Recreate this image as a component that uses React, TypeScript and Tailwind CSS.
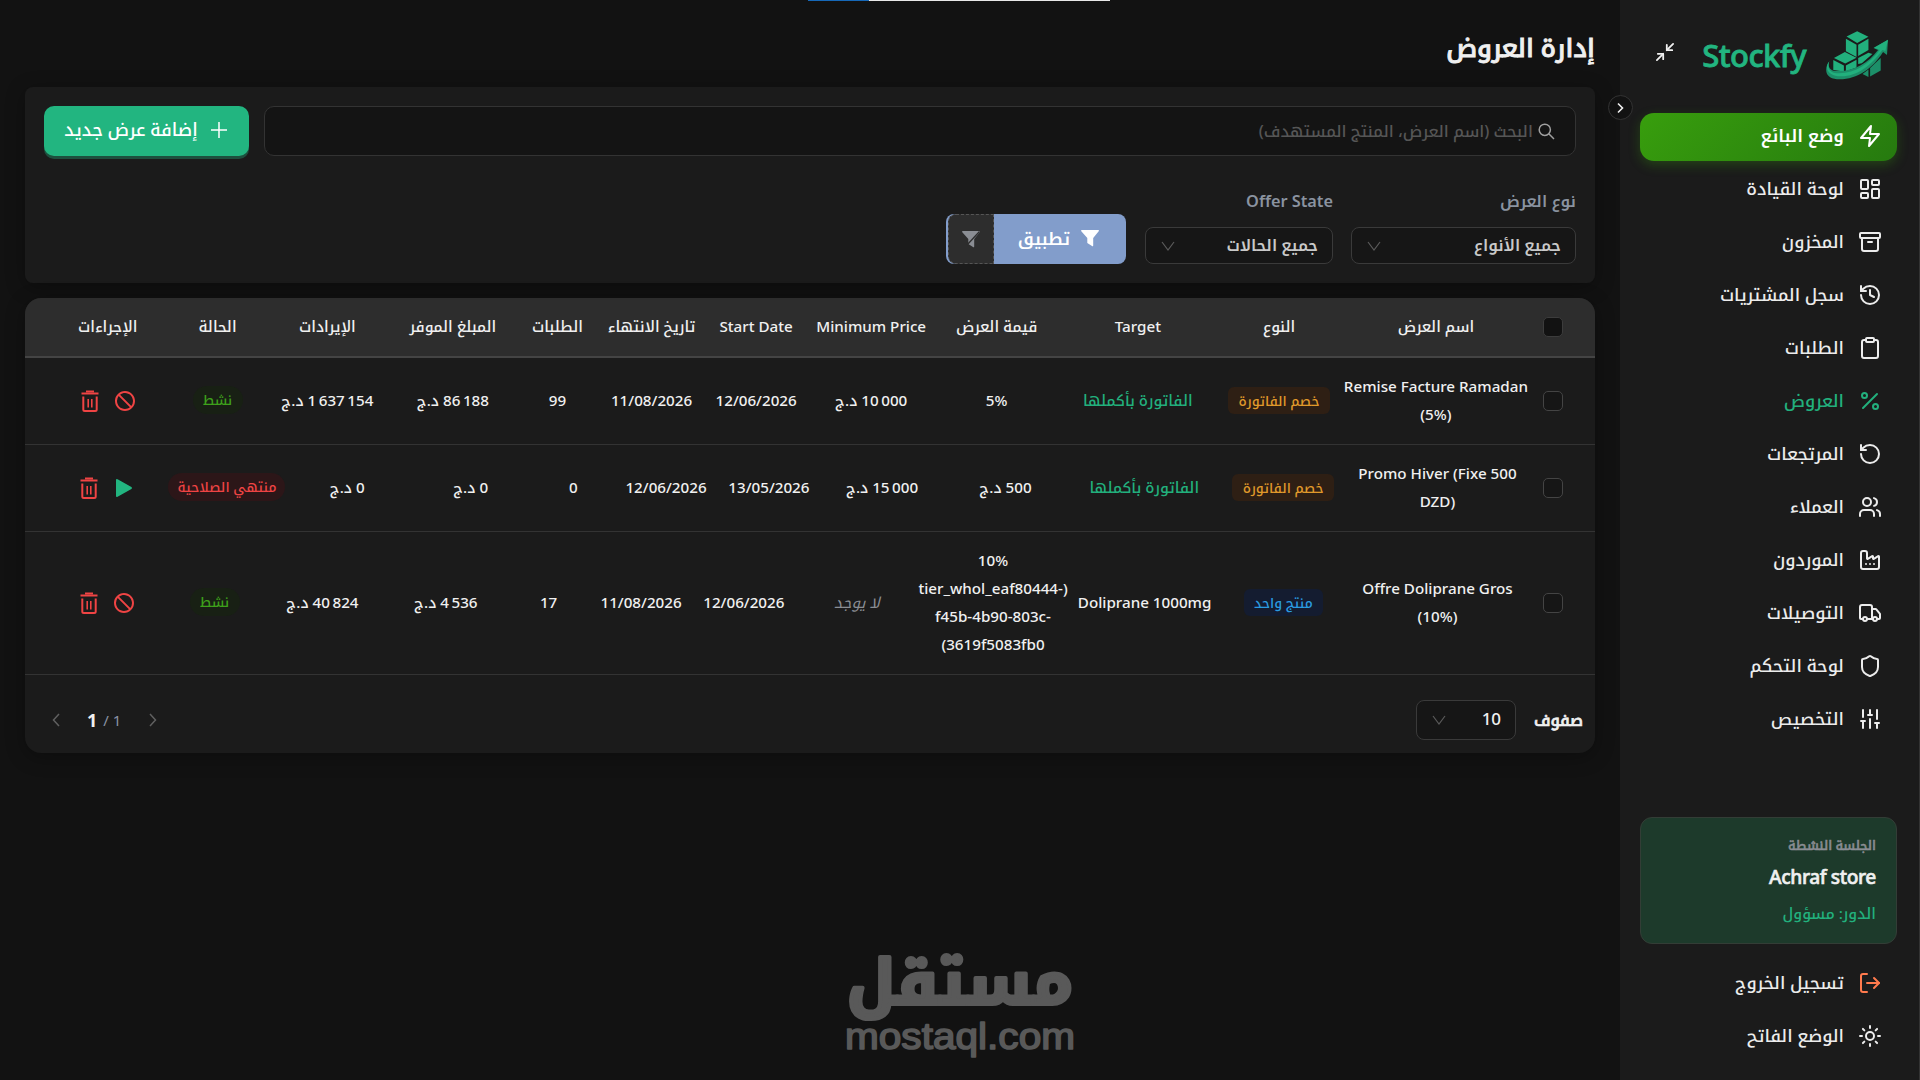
import type { ReactNode } from "react";
import {
  Archive,
  Clipboard,
  Factory,
  History,
  LayoutDashboard,
  LogOut,
  Minimize2,
  Percent,
  RotateCcw,
  Shield,
  SlidersVertical,
  Sun,
  Truck,
  Users,
} from "lucide-react";
import { FiZap } from "react-icons/fi";
import { MdBlock } from "react-icons/md";

const navItems = [
  { label: "لوحة القيادة", icon: LayoutDashboard },
  { label: "المخزون", icon: Archive },
  { label: "سجل المشتريات", icon: History },
  { label: "الطلبات", icon: Clipboard },
  { label: "العروض", icon: Percent, active: true },
  { label: "المرتجعات", icon: RotateCcw },
  { label: "العملاء", icon: Users },
  { label: "الموردون", icon: Factory },
  { label: "التوصيلات", icon: Truck },
  { label: "لوحة التحكم", icon: Shield },
  { label: "التخصيص", icon: SlidersVertical },
];

const columns = [
  "grow-18",
  "grow-12",
  "grow-15",
  "grow-12",
  "grow-12",
  "grow-10",
  "grow-10",
  "grow-8",
  "grow-12",
  "grow-12",
  "grow-9",
  "grow-12",
];

const headers = [
  "اسم العرض",
  "النوع",
  "Target",
  "قيمة العرض",
  "Minimum Price",
  "Start Date",
  "تاريخ الانتهاء",
  "الطلبات",
  "المبلغ الموفر",
  "الإيرادات",
  "الحالة",
  "الإجراءات",
];

interface Offer {
  name: string[];
  type: "invoice" | "product";
  target: string;
  value: string[];
  minimum?: string;
  start: string;
  end: string;
  orders: string;
  saved: string;
  revenue: string;
  active: boolean;
}

const offers: Offer[] = [
  {
    name: ["Remise Facture Ramadan", "(5%)"],
    type: "invoice",
    target: "الفاتورة بأكملها",
    value: ["5%"],
    minimum: "10\u202f000",
    start: "12/06/2026",
    end: "11/08/2026",
    orders: "99",
    saved: "86\u202f188",
    revenue: "1\u202f637\u202f154",
    active: true,
  },
  {
    name: ["Promo Hiver (Fixe 500", "DZD)"],
    type: "invoice",
    target: "الفاتورة بأكملها",
    value: ["500 د.ج"],
    minimum: "15\u202f000",
    start: "13/05/2026",
    end: "12/06/2026",
    orders: "0",
    saved: "0",
    revenue: "0",
    active: false,
  },
  {
    name: ["Offre Doliprane Gros", "(10%)"],
    type: "product",
    target: "Doliprane 1000mg",
    value: ["10%", "tier_whol_eaf80444-)", "f45b-4b90-803c-", "(3619f5083fb0"],
    start: "12/06/2026",
    end: "11/08/2026",
    orders: "17",
    saved: "4\u202f536",
    revenue: "40\u202f824",
    active: true,
  },
];

function Logo() {
  return (
    <svg viewBox="680 92 190 150" className="h-[50px] w-[63px]" fill="#22b07d">
      <path d="M742 111 774 95l34 17-34 19zM740 118l32 18v37l-32-17zM777 136l31-18v34l-31 18z" />
      <path d="m704 176 33-18 35 17-34 18zM702 182l32 17v18l-32-5zM740 199l32-18v24l-32 11z" />
      <path d="m777 176 31-16 12 4-32 28-11 2z" />
      <path fill="#1c8f69" d="m790 224 18-13v22zM813 206l32-30v38l-32 18z" />
      <path
        fill="#1c8f69"
        d="M690 186c-5 12-1 27 18 29 52 4 98-22 129-63l-14-6 44-25-3 46-12-9c-32 52-84 86-139 82-37-2-39-34-23-54z"
      />
      <path d="M690 186c-7 18 1 34 22 36 54 3 96-27 130-70l-17-7 42-24-8 34-9-3c-35 48-80 84-134 79-32-4-41-26-26-45z" />
    </svg>
  );
}

function ChevronDown() {
  return (
    <svg viewBox="0 0 14 12" className="h-3 w-3.5 text-[#5a5a5a]" fill="none" stroke="currentColor" strokeWidth="1.2">
      <path d="M1 2l6 8 6-8" />
    </svg>
  );
}

function FilterIcon({ slash }: { slash?: boolean }) {
  return (
    <svg viewBox="0 0 18 17" className="h-[17px] w-[18px]" fill="currentColor">
      <path d="M.6 0h16.8q.9.5.3 1.3L12.2 8v7.4q0 .9-.8.9L6.3 13V8L.3 1.3Q-.2.5.6 0z" />
      {slash && <path d="M5 14 17.5.5" stroke="#2d2d2d" strokeWidth="1.3" />}
    </svg>
  );
}

function TrashIcon() {
  return (
    <svg viewBox="0 0 18 22" className="h-[22px] w-[18px]" fill="none" stroke="currentColor" strokeWidth="2">
      <path d="M.5 3.5h17" />
      <path d="M5 1.5h8" />
      <path d="M2.3 6.5v13q0 1.500 1.500 1.500h10.400q1.500 0 1.500-1.500v-13" />
      <path d="M7.2 9v8.5M10.8 9v8.5" strokeWidth="1.6" />
    </svg>
  );
}

function PlayIcon() {
  return (
    <svg viewBox="0 0 18 20" className="h-5 w-[18px]" fill="currentColor">
      <path d="M1 2.2Q1 .4 2.6 1.300l13.800 7.600q1.400 1.100 0 2.200L2.600 18.700Q1 19.600 1 17.800z" />
    </svg>
  );
}

function Checkbox({ header }: { header?: boolean }) {
  return (
    <div className={`flex w-[53px] shrink-0 items-center ${header ? "" : "pt-0.5"}`}>
      <span
        className={`ms-5 size-5 rounded-[5px] border ${
          header ? "border-[#3c3c3c] bg-[#121212]" : "border-[#444444] bg-[#161616]"
        }`}
      />
    </div>
  );
}

function Cell({ index, className = "", children }: { index: number; className?: string; children: ReactNode }) {
  return (
    <div className={`flex basis-0 items-center justify-center text-center whitespace-nowrap ${columns[index]} ${className || "min-w-0"}`}>
      {children}
    </div>
  );
}

function Money({ amount }: { amount: string }) {
  return (
    <span>
      <bdi>{amount}</bdi> د.ج
    </span>
  );
}

function OfferRow({ offer }: { offer: Offer }) {
  return (
    <div className="flex border-b border-[#333333] ps-3 pe-5 pt-3.5 pb-4 text-[15.2px] leading-[28px]">
      <Checkbox />
      <Cell index={0}>
        <div dir="ltr">
          {offer.name.map((line) => (
            <div key={line}>{line}</div>
          ))}
        </div>
      </Cell>
      <Cell index={1}>
        <span
          className={`rounded-md text-[13.6px] leading-[27px] ${
            offer.type === "invoice" ? "w-[102px] bg-[#2e1f14] text-[#e09a2b]" : "w-[79px] bg-[#141c30] text-[#2a9be0]"
          }`}
        >
          {offer.type === "invoice" ? "خصم الفاتورة" : "منتج واحد"}
        </span>
      </Cell>
      <Cell index={2} className={offer.type === "invoice" ? "min-w-0 text-[#22b07d]" : ""}>
        {offer.target}
      </Cell>
      <Cell index={3} className={offer.value.length > 1 ? "min-w-[149px]" : ""}>
        <div>
          {offer.value.map((line) => (
            <div key={line} dir={line.includes("د") ? "rtl" : "ltr"}>
              {line}
            </div>
          ))}
        </div>
      </Cell>
      <Cell index={4}>
        {offer.minimum ? <Money amount={offer.minimum} /> : <span className="font-normal text-[#8a8d93] italic">لا يوجد</span>}
      </Cell>
      <Cell index={5}>{offer.start}</Cell>
      <Cell index={6}>{offer.end}</Cell>
      <Cell index={7}>{offer.orders}</Cell>
      <Cell index={8}>
        <Money amount={offer.saved} />
      </Cell>
      <Cell index={9}>
        <Money amount={offer.revenue} />
      </Cell>
      <Cell index={10} className={offer.active ? "" : "min-w-[117px]"}>
        <span
          className={`rounded-full text-[13.6px] leading-7 ${
            offer.active ? "w-[50px] bg-[#182014] text-[#3ea11b]" : "w-[117px] bg-[#2c1618] text-[#ef4444]"
          }`}
        >
          {offer.active ? "نشط" : "منتهي الصلاحية"}
        </span>
      </Cell>
      <Cell index={11}>
        <div className="flex items-center gap-3.5 pt-px pl-[3px] text-[#ef4444]">
          {offer.active ? (
            <MdBlock className="size-6 -scale-x-100" />
          ) : (
            <span className="flex w-6 justify-center text-[#22b580]">
              <PlayIcon />
            </span>
          )}
          <TrashIcon />
        </div>
      </Cell>
    </div>
  );
}

function Select({ value, className }: { value: string; className: string }) {
  return (
    <div className={`flex items-center justify-between rounded-lg border border-[#3a3a3a] bg-[#161616] ps-3.5 pe-[15px] ${className}`}>
      <span className="pb-0.5">{value}</span>
      <ChevronDown />
    </div>
  );
}

function Sidebar() {
  return (
    <aside className="relative flex w-[300px] shrink-0 flex-col border-r border-[#333333] bg-[#1b1b1b] ps-[22px] pe-5">
      <button className="absolute top-[95px] -left-3 flex size-[25px] items-center justify-center rounded-full border border-[#333333] bg-[#121212] pr-px text-[#f0f0f0]">
        <svg viewBox="0 0 8 12" className="h-3 w-2" fill="none" stroke="currentColor" strokeWidth="1.6">
          <path d="M2 1.5 6.5 6 2 10.5" />
        </svg>
      </button>

      <div className="flex h-[113px] shrink-0 items-start ps-2 pt-[30px]">
        <Logo />
        <span className="ms-[20px] mt-0.5 text-[31px] leading-[46px] font-medium tracking-[-0.6px] text-[#22b580] [-webkit-text-stroke:0.8px]">
          Stockfy
        </span>
        <Minimize2 className="ms-auto me-[13px] mt-[10px] size-6 scale-90 text-[#f0f0f0]" strokeWidth={2} />
      </div>

      <nav className="flex flex-col gap-[5px] text-[17.6px] font-medium text-[#ececec]">
        <a className="flex h-12 items-center gap-3.5 rounded-[14px] bg-linear-[135deg,#389e0d,#267a0f] px-[15px] pb-[3px] font-semibold text-white shadow-[0_4px_12px_rgba(56,158,13,0.3)]">
          <FiZap className="size-6" />
          وضع البائع
        </a>
        {navItems.map(({ label, icon: Icon, active }) => (
          <a key={label} className={`flex h-12 items-center gap-3.5 px-[15px] pb-[3px] ${active ? "text-[#22b07d]" : ""}`}>
            <Icon className="size-6" />
            {label}
          </a>
        ))}
      </nav>

      <div className="mt-auto flex h-[127px] flex-col rounded-xl border border-[#333d36] bg-[#1d3a2b] px-5 pt-[15px]">
        <span className="text-[12.8px] leading-6 font-medium text-[#8a8d93] [-webkit-text-stroke:0.5px]">الجلسة النشطة</span>
        <span className="mt-[7px] text-[19.2px] leading-[26px] font-medium tracking-[-0.4px] text-[#f0f0f0] [-webkit-text-stroke:0.6px]">
          Achraf store
        </span>
        <span className="mt-[11px] text-[15.2px] leading-6 font-medium text-[#22b07d]">الدور: مسؤول</span>
      </div>

      <div className="mt-[15px] mb-5 flex flex-col gap-[5px] text-[17.6px] font-medium text-[#ececec]">
        <a className="flex h-12 items-center gap-3.5 px-[15px] pb-px">
          <LogOut className="size-6 text-[#ff7a4d]" />
          تسجيل الخروج
        </a>
        <a className="flex h-12 items-center gap-3.5 px-[15px] pb-px">
          <Sun className="size-6" />
          الوضع الفاتح
        </a>
      </div>
    </aside>
  );
}

function Filters() {
  return (
    <section className="h-[196px] rounded-lg bg-[#1b1b1b] px-[19px] pt-[19px] shadow-[0_4px_20px_rgba(0,0,0,0.3)]">
      <div className="flex gap-[15px]">
        <div className="flex h-[50px] flex-1 items-center gap-[5px] rounded-[10px] border border-[#333333] bg-[#141414] ps-5 text-[16.2px] font-medium text-[#565656]">
          <svg viewBox="0 0 17 17" className="size-[17px] text-[#a0a0a0]" fill="none" stroke="currentColor" strokeWidth="1.5">
            <circle cx="6.8" cy="6.8" r="5.6" />
            <path d="m10.8 10.8 5.2 5.2" />
          </svg>
          البحث (اسم العرض، المنتج المستهدف)
        </div>
        <button className="flex h-[50px] w-[205px] items-center justify-center gap-[13px] rounded-[10px] bg-[#22b580] pr-0.5 pb-[3px] text-[17.8px] font-medium text-white shadow-[0_3px_0_rgba(34,181,128,0.35)]">
          <svg viewBox="0 0 16 16" className="size-4" stroke="currentColor" strokeWidth="1.5">
            <path d="M8 0v16M0 8h16" />
          </svg>
          إضافة عرض جديد
        </button>
      </div>

      <div className="mt-[31px] flex items-end gap-[18px] text-[16px] leading-7 font-semibold">
        <div className="flex flex-col">
          <label className="mb-3 text-[#8a93a0]">نوع العرض</label>
          <Select value="جميع الأنواع" className="h-[37px] w-[225px] text-[#c9c9c9]" />
        </div>
        <div className="flex flex-col">
          <label className="mb-3 text-[16.3px] text-[#8a93a0]">Offer State</label>
          <Select value="جميع الحالات" className="h-[37px] w-[188px] text-[#c9c9c9]" />
        </div>
        <div className="ms-px flex h-[50px] w-[180px] overflow-hidden rounded-lg bg-[#829dcb]">
          <button className="flex w-[132px] items-center justify-center gap-[11px] pr-[3px] pb-px text-[17.2px] font-semibold text-white">
            <FilterIcon />
            تطبيق
          </button>
          <button className="flex w-[46px] items-center justify-center rounded-l-lg border border-dashed border-[#555555] bg-[#2d2d2d] text-[#8a8d93]">
            <FilterIcon slash />
          </button>
        </div>
      </div>
    </section>
  );
}

function OffersTable() {
  return (
    <section className="mt-[15px] h-[455px] overflow-hidden rounded-2xl bg-[#1b1b1b] font-medium text-[#f0f0f0] shadow-[0_4px_20px_rgba(0,0,0,0.3)]">
      <div className="flex h-[60px] border-b-2 border-[#444444] bg-[#2d2d2d] ps-3 pe-5 text-[15.2px]">
        <Checkbox header />
        {headers.map((label, i) => (
          <Cell key={label} index={i} className="min-w-0 pb-0.5">
            {label}
          </Cell>
        ))}
      </div>
      {offers.map((offer) => (
        <OfferRow key={offer.name[0]} offer={offer} />
      ))}

      <div className="flex h-[78px] items-center justify-between pt-3 ps-3 pe-[27px]">
        <div className="flex items-center gap-[18px]">
          <span className="text-[16px] font-medium [-webkit-text-stroke:0.7px]">صفوف</span>
          <Select value="10" className="h-10 w-[100px] text-[17px]" />
        </div>
        <div dir="ltr" className="flex items-center text-[#5f5f5f]">
          <svg viewBox="0 0 8 14" className="h-3.5 w-2" fill="none" stroke="currentColor" strokeWidth="1.5">
            <path d="M7 1 1.5 7 7 13" />
          </svg>
          <span className="ms-[27px] text-[18px] font-bold text-[#f0f0f0]">1</span>
          <span className="ms-1.5 text-[15px] font-normal text-[#8a93a5]">/ 1</span>
          <svg viewBox="0 0 8 14" className="ms-7 h-3.5 w-2" fill="none" stroke="currentColor" strokeWidth="1.5">
            <path d="M1 1l5.5 6L1 13" />
          </svg>
        </div>
      </div>
    </section>
  );
}

function Watermark() {
  return (
    <svg
      viewBox="0 0 240 120"
      className="absolute top-[945px] left-[840px] h-[120px] w-[240px] overflow-visible"
      fill="#595959"
      stroke="#595959"
      strokeLinejoin="round"
    >
      <text
        x="120"
        y="59"
        direction="rtl"
        textAnchor="middle"
        fontSize="62"
        fontWeight="700"
        strokeWidth="4"
        textLength="226"
        lengthAdjust="spacingAndGlyphs"
      >
        مستقل
      </text>
      <text
        x="120"
        y="104"
        direction="ltr"
        textAnchor="middle"
        fontFamily="Liberation Sans"
        fontSize="37"
        strokeWidth="1.6"
        textLength="230"
        lengthAdjust="spacingAndGlyphs"
      >
        mostaql.com
      </text>
    </svg>
  );
}

export default function App() {
  return (
    <div
      dir="rtl"
      className="relative flex h-[1080px] w-[1920px] overflow-hidden bg-[#121212] font-['Noto_Sans','Noto_Kufi_Arabic','Noto_Sans_Arabic','DejaVu_Sans',sans-serif] text-[#f0f0f0]"
    >
      <Sidebar />
      <main className="flex-1 px-[25px]">
        <h1 className="h-[87px] pt-[29px] text-[25.6px] leading-[38px] font-medium [-webkit-text-stroke:0.9px]">إدارة العروض</h1>
        <Filters />
        <OffersTable />
      </main>
      <div dir="ltr" className="absolute top-0 left-[808px] flex h-px w-[302px] bg-[#e8e8e8]">
        <span className="w-[61px] bg-[#1668b8]" />
      </div>
      <Watermark />
    </div>
  );
}
